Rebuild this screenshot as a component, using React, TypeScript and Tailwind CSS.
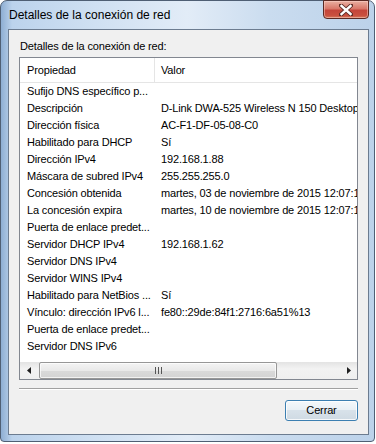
import React from "react";

const rows: [string, string][] = [
  ["Sufijo DNS específico p...", ""],
  ["Descripción", "D-Link DWA-525 Wireless N 150 Desktop Adapter"],
  ["Dirección física", "AC-F1-DF-05-08-C0"],
  ["Habilitado para DHCP", "Sí"],
  ["Dirección IPv4", "192.168.1.88"],
  ["Máscara de subred IPv4", "255.255.255.0"],
  ["Concesión obtenida", "martes, 03 de noviembre de 2015 12:07:15"],
  ["La concesión expira", "martes, 10 de noviembre de 2015 12:07:15"],
  ["Puerta de enlace predet...", ""],
  ["Servidor DHCP IPv4", "192.168.1.62"],
  ["Servidor DNS IPv4", ""],
  ["Servidor WINS IPv4", ""],
  ["Habilitado para NetBios ...", "Sí"],
  ["Vínculo: dirección IPv6 l...", "fe80::29de:84f1:2716:6a51%13"],
  ["Puerta de enlace predet...", ""],
  ["Servidor DNS IPv6", ""],
];

function CloseButton() {
  return (
    <div className="w-[46px] h-[19px] -mt-[1px] rounded-b-[4px] border border-[#5a2a24] bg-[linear-gradient(180deg,#eab0a2_0%,#d9786a_45%,#c4453a_55%,#c9503f_85%,#d77b5e_100%)] flex items-center justify-center shadow-[inset_0_0_0_1px_rgba(255,220,210,0.45)]">
      <svg width="14" height="12" viewBox="0 0 14 12">
        <path d="M2 1.5 L12 10.5 M12 1.5 L2 10.5" stroke="#5b2b25" strokeWidth="4.2" strokeLinecap="square" />
        <path d="M2.5 2 L11.5 10 M11.5 2 L2.5 10" stroke="#ffffff" strokeWidth="2.4" strokeLinecap="square" />
      </svg>
    </div>
  );
}

export default function App() {
  return (
    <div className="w-[376px] h-[444px] bg-white" style={{ fontFamily: '"Liberation Sans", Arial, sans-serif' }}>
      <div className="w-[375px] h-[442px] rounded-t-[7px] rounded-b-[4px] border border-[#4f5f74] bg-[linear-gradient(90deg,#8eaed3_0%,#bcd3ec_3%,#cfe0f2_25%,#e2ecf7_50%,#cadcef_72%,#bcd2ea_100%)] flex flex-col pl-[7px] pr-[5px] pb-[6px]">
        <div className="h-[28px] flex items-start justify-between shrink-0">
          <span className="mt-[6px] ml-[1px] text-[12px] text-black leading-[16px]">Detalles de la conexión de red</span>
          <CloseButton />
        </div>
        <div className="flex-1 border border-[#6c7c90] bg-[#f0f0f0] flex flex-col px-[10px] text-[11px] tracking-[-0.15px] text-black">
          <div className="h-[16px] mt-[8px] ml-[1px] leading-[16px]">Detalles de la conexión de red:</div>
          <div className="mt-[3px] h-[323px] border border-[#828790] bg-white flex flex-col overflow-hidden">
            <div className="h-[25px] shrink-0 flex border-b border-[#e5e5e5]">
              <div className="w-[135px] shrink-0 border-r border-[#e5e5e5] pl-[7px] flex items-center">Propiedad</div>
              <div className="flex-1 pl-[6px] flex items-center">Valor</div>
            </div>
            <div className="flex-1 overflow-hidden">
              {rows.map(([k, v], i) => (
                <div key={i} className="h-[17px] flex items-center whitespace-nowrap">
                  <div className="w-[135px] shrink-0 pl-[7px] overflow-hidden">{k}</div>
                  <div className="flex-1 pl-[6px] overflow-hidden">{v}</div>
                </div>
              ))}
            </div>
            <div className="h-[17px] shrink-0 flex bg-[linear-gradient(180deg,#e3e3e3_0%,#f2f2f2_40%,#efefef_100%)]">
              <div className="w-[17px] flex items-center justify-center">
                <svg width="4" height="7" viewBox="0 0 4 7"><path d="M4 0 L0 3.5 L4 7 Z" fill="#1f1f1f" /></svg>
              </div>
              <div className="ml-[2px] w-[238px] h-[17px] rounded-[2px] border border-[#979797] bg-[linear-gradient(180deg,#f4f4f4_0%,#e9e9e9_50%,#dadada_51%,#d3d3d3_100%)] flex items-center justify-center shadow-[inset_0_0_0_1px_rgba(255,255,255,0.7)]">
                <svg width="7" height="7" viewBox="0 0 7 7">
                  <path d="M0.5 0 V7 M3.5 0 V7 M6.5 0 V7" stroke="#555" strokeWidth="1" />
                </svg>
              </div>
              <div className="flex-1" />
              <div className="w-[17px] flex items-center justify-center">
                <svg width="4" height="7" viewBox="0 0 4 7"><path d="M0 0 L4 3.5 L0 7 Z" fill="#1f1f1f" /></svg>
              </div>
            </div>
          </div>
          <div className="mt-[8px] h-[2px] border-t border-[#a0a0a0] border-b-white border-b" />
          <div className="flex justify-end mt-[10px]">
            <button className="w-[73px] h-[21px] rounded-[3px] border border-[#3c7fb1] bg-[linear-gradient(180deg,#f4f8fb_0%,#e9f0f5_45%,#d8e2ea_50%,#cfdae3_100%)] text-[11px] text-black shadow-[inset_0_0_0_1px_rgba(255,255,255,0.8)]">
              Cerrar
            </button>
          </div>
        </div>
      </div>
    </div>
  );
}
